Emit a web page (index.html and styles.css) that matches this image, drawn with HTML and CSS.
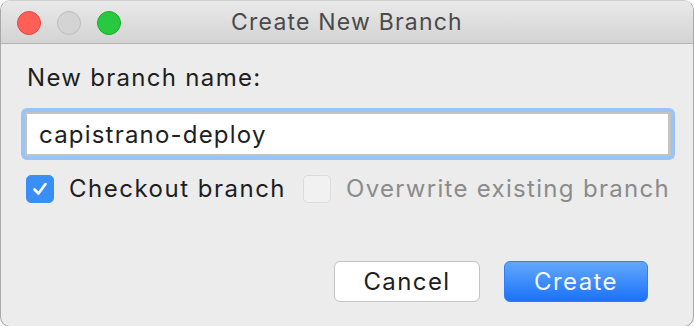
FILE: index.html
```html
<!DOCTYPE html>
<html lang="en">
<head>
    <meta charset="UTF-8">
    <title>Create New Branch</title>
    <link rel="stylesheet" href="styles.css">
</head>
<body>
    <div class="window">
        <!-- Title bar -->
        <div class="titlebar">
            <div class="lights">
                <span class="light red"></span>
                <span class="light grey"></span>
                <span class="light green"></span>
            </div>
            <div class="title">Create New Branch</div>
        </div>

        <!-- Dialog content -->
        <div class="content">
            <label class="field-label" for="branch_name">New branch name:</label>
            <div class="focus-ring">
                <input type="text" id="branch_name" class="text-input" value="capistrano-deploy">
            </div>

            <div class="options">
                <label class="option">
                    <span class="box checked">
                        <svg width="18" height="18" viewBox="0 0 18 18"><path d="M3.5 9.5 L7.5 13.5 L14.5 4" fill="none" stroke="#fff" stroke-width="2.6" stroke-linecap="round" stroke-linejoin="round"/></svg>
                    </span>
                    Checkout branch
                </label>
                <label class="option disabled">
                    <span class="box"></span>
                    Overwrite existing branch
                </label>
            </div>

            <div class="buttons">
                <button class="btn cancel-btn">Cancel</button>
                <button class="btn create-btn">Create</button>
            </div>
        </div>
    </div>
</body>
</html>
```

FILE: styles.css
```css
body {
    margin: 0;
    background-color: #ffffff;
    font-family: Inter, "Noto Sans", sans-serif;
}

.window {
    width: 692px;
    height: 325px;
    border: 1px solid #a9a9a9;
    border-top-color: #d0d0d0;
    border-radius: 10px;
    background-color: #ececec;
    overflow: hidden;
    display: flex;
    flex-direction: column;
}

/* Title bar */
.titlebar {
    height: 42px;
    background: linear-gradient(#e9e9e9, #d3d3d3);
    border-bottom: 1px solid #b4b4b4;
    display: flex;
    align-items: center;
    position: relative;
}

.lights {
    display: flex;
    gap: 16px;
    padding-left: 16px;
    margin-top: 1px;
}

.light {
    width: 24px;
    height: 24px;
    border-radius: 50%;
    box-sizing: border-box;
}

.red {
    background-color: #fe5f57;
    border: 1px solid #e2463f;
}

.grey {
    background-color: #d4d4d4;
    border: 1px solid #bdbdbd;
}

.green {
    background-color: #28c840;
    border: 1px solid #1aab29;
}

.title {
    position: absolute;
    left: 0;
    right: 0;
    text-align: center;
    font-size: 23px;
    letter-spacing: 1.2px;
    color: #4a4a4a;
}

/* Content */
.content {
    flex: 1;
    padding: 20px 20px 0 20px;
    display: flex;
    flex-direction: column;
    font-size: 24px;
    letter-spacing: 1.3px;
}

.field-label {
    color: #1e1e1e;
    padding-left: 6px;
    height: 28px;
    line-height: 28px;
}

.focus-ring {
    margin-top: 16px;
    width: 646px;
    padding: 4px;
    background-color: #9cc3f6;
    border-radius: 6px;
}

.text-input {
    display: block;
    width: 100%;
    height: 44px;
    box-sizing: border-box;
    border: 2px solid #c3c3c3;
    border-right-width: 3px;
    background-color: #fff;
    font-family: inherit;
    font-size: 24px;
    letter-spacing: 1.2px;
    color: #1e1e1e;
    padding: 0 12px;
    outline: none;
}

.options {
    display: flex;
    gap: 17px;
    margin-top: 15px;
    padding-left: 5px;
    line-height: 28px;
}

.option {
    display: flex;
    align-items: center;
    gap: 15px;
    color: #1e1e1e;
    letter-spacing: 1.5px;
}

.option.disabled {
    color: #8b8b8b;
    letter-spacing: 1.3px;
}

.box {
    width: 28px;
    height: 28px;
    box-sizing: border-box;
    border-radius: 5px;
    border: 1px solid #dcdcdc;
    background-color: #f1f1f1;
    display: flex;
    align-items: center;
    justify-content: center;
}

.box.checked {
    background-color: #3a8ff6;
    border-color: #3a8ff6;
}

.buttons {
    display: flex;
    justify-content: flex-end;
    gap: 24px;
    margin-top: 58px;
    padding-right: 25px;
}

.btn {
    height: 41px;
    border-radius: 6px;
    font-family: inherit;
    font-size: 24px;
    letter-spacing: 1.4px;
    padding: 0;
}

.cancel-btn {
    width: 146px;
    background-color: #fff;
    border: 1px solid #c4c4c4;
    color: #1e1e1e;
}

.create-btn {
    width: 144px;
    background: linear-gradient(#62a8fb, #1a72f8);
    border: 1px solid #2f7ff2;
    color: #f2f6fd;
}
```
